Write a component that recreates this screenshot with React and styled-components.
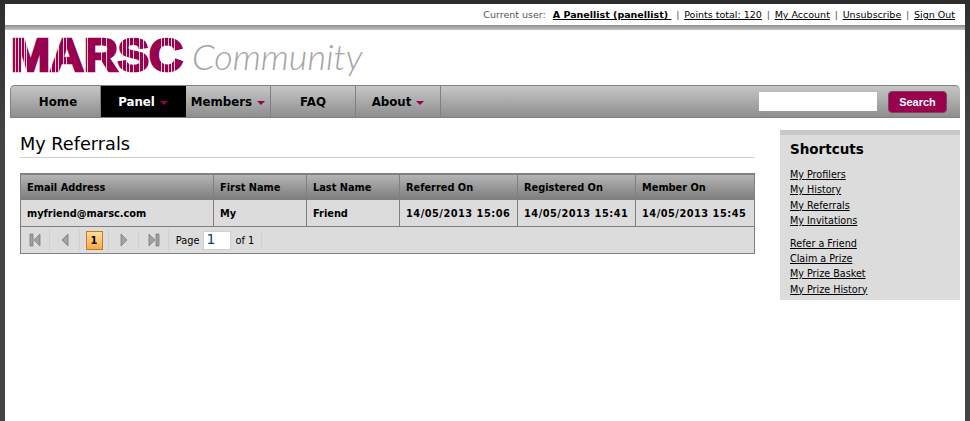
import React from 'react'
import styled, { createGlobalStyle } from 'styled-components'

const Global = createGlobalStyle`
  html, body { margin: 0; height: 100%; }
  body {
    background: linear-gradient(#2e2e2e, #444 140px);
    font-family: "DejaVu Sans", Verdana, sans-serif;
    font-size: 9.8px;
    color: #000;
  }
  #root { height: 100%; }
  a { color: #000; text-decoration: underline; }
`

const Page = styled.div`
  box-sizing: border-box;
  height: 421px;
  margin: 0 5px;
  padding-top: 4px;
`
const Sheet = styled.div`
  height: 417px;
  background: #fff;
`
const TopBar = styled.div`
  height: 21px;
  display: flex;
  align-items: center;
  justify-content: flex-end;
  padding-right: 10px;
  color: #555;
  font-size: 9.5px;
  white-space: pre;
`
const UserLink = styled.a`
  font-weight: bold;
  margin-left: 7px;
`
const Sep = styled.span`
  margin: 0 4.8px;
`
const Rule = styled.div`
  height: 5px;
  background: linear-gradient(#8e8e8e, #c4c4c4);
`
const LogoRow = styled.div`
  height: 55px;
  padding-left: 2px;
  display: flex;
  align-items: flex-start;
`
const Mark = styled.svg`
  flex: none;
  overflow: visible;
`
const Community = styled.div`
  margin: 1px 0 0 5px;
  font: italic 300 36px/50px Lato, "Open Sans", sans-serif;
  color: #a4a4a4;
`
const Nav = styled.div`
  box-sizing: border-box;
  height: 33px;
  margin: 0 5px;
  display: flex;
  align-items: stretch;
  justify-content: space-between;
  border: 1px solid #808080;
  border-width: 1px 0 1px 1px;
  border-radius: 5px 5px 0 0;
  background: linear-gradient(#c6c6c6, #8e8e8e);
`
const Items = styled.div`
  display: flex;
`
const Item = styled.div`
  box-sizing: border-box;
  width: ${p => (p.$first ? '90px' : '85px')};
  padding: 1px 0 0 ${p => (p.$first ? '5px' : '0')};
  display: flex;
  align-items: center;
  justify-content: center;
  gap: 5px;
  font-size: 11.8px;
  font-weight: bold;
  color: ${p => (p.$active ? '#fff' : '#000')};
  background: ${p => (p.$active ? '#000' : 'transparent')};
  border-right: 1px solid ${p => (p.$active ? '#000' : '#808080')};
`
const Caret = styled.i`
  width: 0;
  height: 0;
  margin-top: 2px;
  border: 4px solid transparent;
  border-top-color: #99004d;
  border-bottom: 0;
`
const SearchBox = styled.div`
  display: flex;
  align-items: center;
  gap: 11px;
  padding-right: 13px;
`
const SearchInput = styled.div`
  box-sizing: border-box;
  width: 118px;
  height: 19px;
  background: #fff;
`
const SearchButton = styled.div`
  box-sizing: border-box;
  width: 59px;
  height: 22px;
  display: flex;
  align-items: center;
  justify-content: center;
  border: 1px solid #7d4462;
  border-radius: 4px;
  background: #99004d;
  color: #fff;
  font: bold 11px "Liberation Sans", Arial, sans-serif;
`
const Body = styled.div`
  display: flex;
  justify-content: space-between;
  padding: 12px 5px 0 15px;
`
const Main = styled.div`
  width: 735px;
`
const Heading = styled.h1`
  margin: 0;
  height: 27px;
  border-bottom: 1px solid #d0d0d0;
  font-size: 17.7px;
  line-height: 29px;
  font-weight: normal;
`
const Grid = styled.div`
  box-sizing: border-box;
  margin-top: 15px;
  border: 1px solid #808080;
  border-top-width: 2px;
  background: #dcdcdc;
`
const Row = styled.div`
  display: grid;
  grid-template-columns: 193px 93px 93px 118px 118px 1fr;
  height: ${p => (p.$head ? '24px' : '26px')};
  background: ${p => (p.$head ? 'linear-gradient(#b4b4b4, #7e7e7e)' : '#dcdcdc')};
  border-bottom: 1px solid #808080;
`
const Cell = styled.div`
  display: flex;
  align-items: center;
  padding-left: 6px;
  font-weight: bold;
  letter-spacing: ${p => (p.$date ? '0.5px' : '0')};
  border-right: 1px solid #808080;
  &:last-child { border-right: 0; }
`
const Pager = styled.div`
  height: 26px;
  display: flex;
  align-items: center;
`
const PagerCell = styled.div`
  box-sizing: border-box;
  width: ${p => p.$w}px;
  height: 20px;
  display: flex;
  align-items: center;
  justify-content: center;
  gap: 4px;
  border-right: 1px solid #cfcfcf;
`
const Current = styled.div`
  box-sizing: border-box;
  width: 17px;
  height: 19px;
  display: flex;
  align-items: center;
  justify-content: center;
  border: 1px solid #c47a22;
  background: linear-gradient(#ffdc9c, #f9ab44);
  font-weight: bold;
`
const PageInput = styled.span`
  box-sizing: border-box;
  width: 28px;
  height: 19px;
  padding-left: 2px;
  background: #fff;
  border: 1px solid #d0d0d0;
  font-size: 14px;
  line-height: 15px;
  color: #0f3f7c;
`
const Side = styled.div`
  box-sizing: border-box;
  width: 180px;
  height: 170px;
  padding: 6px 10px 0;
  border-top: 5px solid #c8c8c8;
  background: #dcdcdc;
`
const SideTitle = styled.h3`
  margin: 0 0 9px;
  font-size: 13.5px;
  line-height: 17px;
`
const LinkList = styled.div`
  display: flex;
  flex-direction: column;
  margin-bottom: 7.5px;
  font-size: 9.6px;
  line-height: 15.3px;
`

const stripes = [15, 18, 21, 24, 26, 51, 55, 58, 63, 66, 84, 87, 101, 106, 122, 126, 129, 133, 139, 143, 161, 164, 168, 171, 174]

// logo wordmark, stripes are white lines laid over the letters
const Logo = () => (
  <Mark width="180" height="55" viewBox="7 30 180 55">
    <text
      x="11"
      y="70.8"
      textLength="172"
      lengthAdjust="spacingAndGlyphs"
      fontFamily="Liberation Sans, Arial, sans-serif"
      fontWeight="bold"
      fontSize="47"
      fill="#99004d"
      stroke="#99004d"
      strokeWidth="2.6"
    >
      MARSC
    </text>
    {stripes.map(x => (
      <rect key={x} x={x} y="32" width="1" height="44" fill="#fff" opacity=".8" />
    ))}
  </Mark>
)

const NavIcon = ({ d }) => (
  <svg width="12" height="14" viewBox="0 0 12 14">
    <path d={d} fill="#a2a2a2" stroke="#747474" strokeWidth=".7" />
  </svg>
)

export default function App() {
  return (
    <Page>
      <Global />
      <Sheet>
        <TopBar>
          Current user:
          <UserLink href="#">A Panellist (panellist) </UserLink><Sep>|</Sep>
          <a href="#">Points total: 120</a><Sep>|</Sep>
          <a href="#">My Account</a><Sep>|</Sep>
          <a href="#">Unsubscribe</a><Sep>|</Sep>
          <a href="#">Sign Out</a>
        </TopBar>
        <Rule />
        <LogoRow>
          <Logo />
          <Community>Community</Community>
        </LogoRow>
        <Nav>
          <Items>
            <Item $first>Home</Item>
            <Item $active>Panel <Caret /></Item>
            <Item>Members <Caret /></Item>
            <Item>FAQ</Item>
            <Item>About <Caret /></Item>
          </Items>
          <SearchBox>
            <SearchInput />
            <SearchButton>Search</SearchButton>
          </SearchBox>
        </Nav>
        <Body>
          <Main>
            <Heading>My Referrals</Heading>
            <Grid>
              <Row $head>
                <Cell>Email Address</Cell><Cell>First Name</Cell><Cell>Last Name</Cell>
                <Cell>Referred On</Cell><Cell>Registered On</Cell><Cell>Member On</Cell>
              </Row>
              <Row>
                <Cell>myfriend@marsc.com</Cell><Cell>My</Cell><Cell>Friend</Cell>
                <Cell $date>14/05/2013 15:06</Cell><Cell $date>14/05/2013 15:41</Cell><Cell $date>14/05/2013 15:45</Cell>
              </Row>
              <Pager>
                <PagerCell $w={29}><NavIcon d="M1 1h3v12H1zM11 1v12L5 7z" /></PagerCell>
                <PagerCell $w={30}><NavIcon d="M9 1v12L3 7z" /></PagerCell>
                <PagerCell $w={29}><Current>1</Current></PagerCell>
                <PagerCell $w={30}><NavIcon d="M3 1v12l6-6z" /></PagerCell>
                <PagerCell $w={30}><NavIcon d="M1 1v12l6-6zM8 1h3v12H8z" /></PagerCell>
                <PagerCell $w={93}>Page <PageInput>1</PageInput> of 1</PagerCell>
              </Pager>
            </Grid>
          </Main>
          <Side>
            <SideTitle>Shortcuts</SideTitle>
            <LinkList>
              <a href="#">My Profilers</a>
              <a href="#">My History</a>
              <a href="#">My Referrals</a>
              <a href="#">My Invitations</a>
            </LinkList>
            <LinkList>
              <a href="#">Refer a Friend</a>
              <a href="#">Claim a Prize</a>
              <a href="#">My Prize Basket</a>
              <a href="#">My Prize History</a>
            </LinkList>
          </Side>
        </Body>
      </Sheet>
    </Page>
  )
}
